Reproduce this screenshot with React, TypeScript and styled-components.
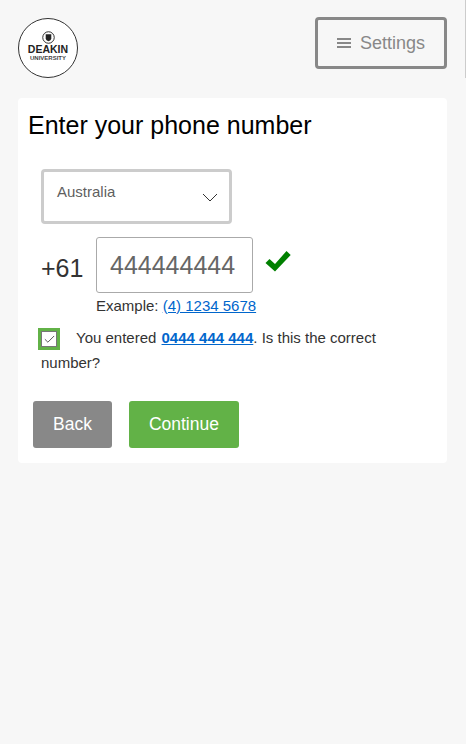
import styled, { createGlobalStyle } from 'styled-components'
import { Check } from 'lucide-react'

const GlobalStyle = createGlobalStyle`
  html, body {
    margin: 0;
    padding: 0;
    background: #f7f7f7;
    font-family: 'Liberation Sans', Arial, sans-serif;
    color: #333;
  }
`

export default function App() {
  return (
    <Page>
      <GlobalStyle />
      <Header>
        <Logo>
          <svg width="13" height="13" viewBox="0 0 14 14">
            <circle cx="7" cy="7" r="6.2" fill="none" stroke="#222" strokeWidth="1" />
            <path d="M4 3.5h6v4.2c0 1.7-1.4 2.6-3 3.300-1.600-.7-3-1.600-3-3.300z" fill="#222" />
          </svg>
          <LogoName>DEAKIN</LogoName>
          <LogoSub>UNIVERSITY</LogoSub>
        </Logo>
        <SettingsButton>
          <svg width="14" height="10" viewBox="0 0 14 10" fill="#888">
            <rect width="14" height="2" />
            <rect y="4" width="14" height="2" />
            <rect y="8" width="14" height="2" />
          </svg>
          Settings
        </SettingsButton>
        <EdgeLine />
      </Header>
      <Card>
        <Title>Enter your phone number</Title>
        <CountrySelect>
          <CountryName>Australia</CountryName>
          <svg width="16" height="9" viewBox="0 0 16 9" fill="none" stroke="#333" strokeWidth="1">
            <path d="M1 1l7 7 7-7" />
          </svg>
        </CountrySelect>
        <PhoneRow>
          <Prefix>+61</Prefix>
          <PhoneInput>444444444</PhoneInput>
          <Tick viewBox="0 0 26 22" width="26" height="22">
            <path d="M.5 13l4-4 5.500 5L21.500 1l4.200 4L10 21.500z" fill="#008000" />
          </Tick>
        </PhoneRow>
        <Example>
          Example: <PlainLink href="#">(4) 1234 5678</PlainLink>
        </Example>
        <Confirm>
          <CheckOutline>
            <CheckBox>
              <Check size={13} strokeWidth={1.5} color="#333" />
            </CheckBox>
          </CheckOutline>
          You entered <StrongLink href="#">0444 444 444</StrongLink>. Is this the correct number?
        </Confirm>
        <Actions>
          <ActionButton $bg="#888888">Back</ActionButton>
          <ActionButton $bg="#62b247">Continue</ActionButton>
        </Actions>
      </Card>
    </Page>
  )
}

const Page = styled.div`
  width: 466px;
  height: 744px;
  overflow: hidden;
  background: #f7f7f7;
`
const Header = styled.header`
  position: relative;
  display: flex;
  justify-content: space-between;
  align-items: flex-start;
  height: 98px;
  padding: 17px 19px 0 18px;
  box-sizing: border-box;
`
const EdgeLine = styled.div`
  position: absolute;
  top: 0;
  right: 0;
  width: 1px;
  height: 78px;
  background: #ccc;
`
const Logo = styled.div`
  display: flex;
  flex-direction: column;
  align-items: center;
  width: 60px;
  height: 60px;
  margin-top: 1px;
  padding-top: 12px;
  box-sizing: border-box;
  border: 1px solid #333;
  border-radius: 50%;
  background: #fff;
  color: #222;
`
const LogoName = styled.span`
  font-size: 10.5px;
  line-height: 10px;
  font-weight: 700;
`
const LogoSub = styled.span`
  margin-top: 1px;
  font-size: 6px;
  line-height: 6px;
  font-weight: 700;
  color: #444;
`
const SettingsButton = styled.button`
  display: flex;
  align-items: center;
  justify-content: center;
  gap: 9px;
  width: 132px;
  height: 52px;
  padding: 0;
  border: 3px solid #888;
  border-radius: 4px;
  background: transparent;
  color: #888;
  font-family: inherit;
  font-size: 18px;
`
const Card = styled.main`
  width: 429px;
  height: 365px;
  margin-left: 18px;
  padding: 12px 10px 0 10px;
  box-sizing: border-box;
  background: #fff;
  border-radius: 4px;
`
const Title = styled.h1`
  margin: 0;
  font-size: 25px;
  line-height: 30px;
  font-weight: 400;
  color: #000;
`
const CountrySelect = styled.div`
  display: flex;
  justify-content: space-between;
  width: 191px;
  height: 55px;
  margin: 29px 0 0 13px;
  padding: 11px 11px 0 13px;
  box-sizing: border-box;
  border: 3px solid #ccc;
  border-radius: 4px;
  svg {
    margin-top: 10px;
  }
`
const CountryName = styled.span`
  font-size: 15px;
  line-height: 18px;
  color: #5f5f5f;
`
const PhoneRow = styled.div`
  display: flex;
  align-items: flex-start;
  margin: 13px 0 0 13px;
`
const Prefix = styled.span`
  width: 55px;
  margin-top: 16px;
  font-size: 25px;
  line-height: 30px;
  color: #333;
`
const PhoneInput = styled.div`
  width: 157px;
  height: 56px;
  padding-left: 13px;
  box-sizing: border-box;
  border: 1px solid #aaa;
  border-radius: 3px;
  font-size: 25px;
  line-height: 54px;
  color: #666;
`
const Tick = styled.svg`
  margin: 13px 0 0 12px;
`
const Example = styled.div`
  margin: 4px 0 0 68px;
  font-size: 15px;
  line-height: 18px;
`
const PlainLink = styled.a`
  color: #0066cc;
`
const Confirm = styled.p`
  width: 360px;
  margin: 10px 0 0 13px;
  font-size: 15px;
  line-height: 25px;
`
const CheckOutline = styled.span`
  display: inline-flex;
  vertical-align: middle;
  margin: 0 16px 0 -3px;
  padding: 3px;
  background: #62b247;
`
const CheckBox = styled.span`
  display: flex;
  align-items: center;
  justify-content: center;
  width: 14px;
  height: 14px;
  border: 1px solid #777;
  background: #fff;
`
const StrongLink = styled.a`
  margin-left: 1px;
  color: #0066cc;
  font-weight: 700;
`
const Actions = styled.div`
  display: flex;
  gap: 17px;
  margin: 26px 0 0 5px;
`
const ActionButton = styled.button<{ $bg: string }>`
  height: 47px;
  padding: 0 20px;
  border: 0;
  border-radius: 3px;
  background: ${p => p.$bg};
  color: #fff;
  font-family: inherit;
  font-size: 17.5px;
`
